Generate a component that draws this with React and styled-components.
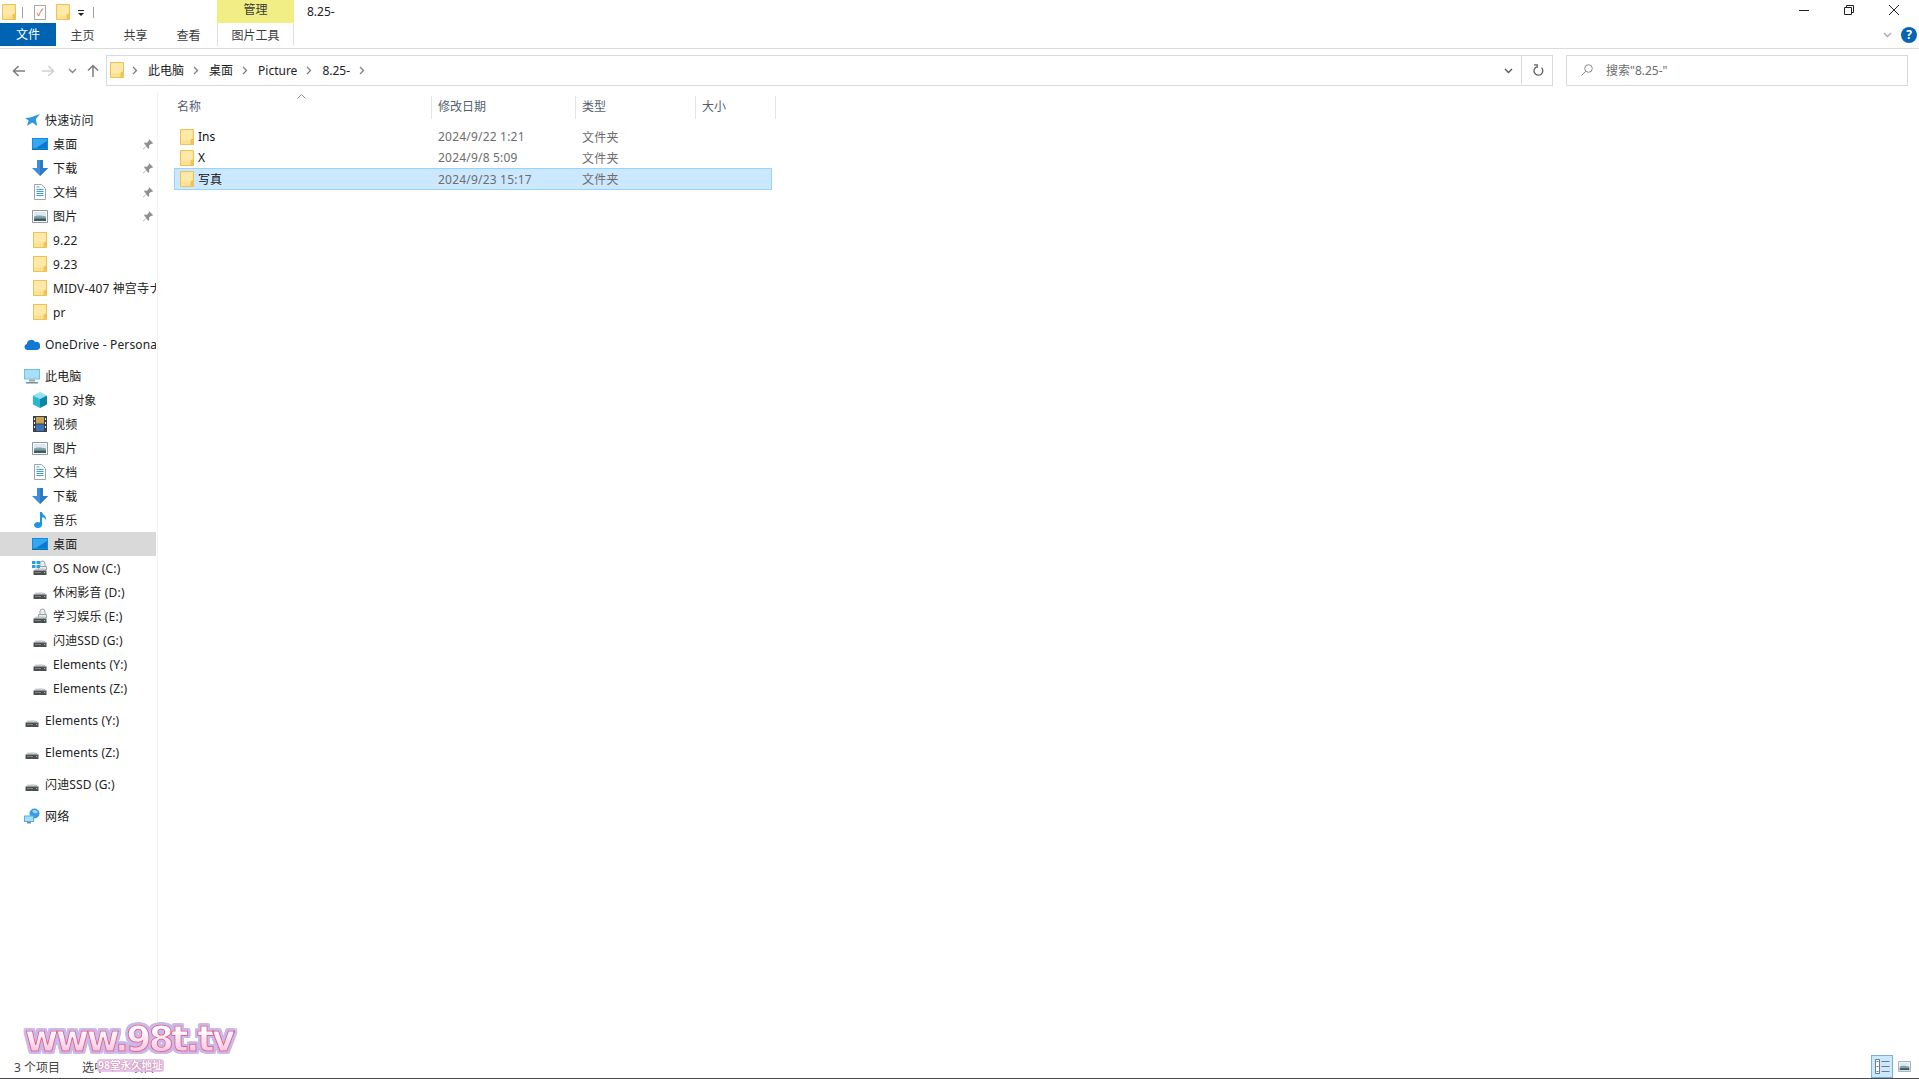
import React from 'react'
import styled, { createGlobalStyle } from 'styled-components'

const GlobalStyle = createGlobalStyle`
  html, body { margin: 0; padding: 0; background: #fff; overflow: hidden; }
  body { font-family: "Noto Sans", "Noto Sans CJK SC", "Liberation Sans", sans-serif; font-size: 12px; color: #1f1f1f; }
  * { box-sizing: border-box; }
`

const Folder = ({ w = 14, h = 16 }) => (
  <svg width={w} height={h} viewBox="0 0 14 16">
    <path d="M.5.5h13v15H.5z" fill="#ffe08f" stroke="#e9c35f" />
    <path d="M1.5 1.5h11v10h-11z" fill="#ffe9a8" />
    <path d="M10.5 15.5v-5l3-1.5v7z" fill="#f0c452" />
  </svg>
)
const Desktop = () => (
  <svg width="16" height="12" viewBox="0 0 16 12">
    <path d="M0 0h16v11H0z" fill="#0f8de0" />
    <path d="M1 1h14v9H1z" fill="#35a7ee" />
    <path d="M4 10 15 3v7z" fill="#0a78cf" />
    <path d="M0 11h16v1H0z" fill="#0b6fb8" />
  </svg>
)
const Download = () => (
  <svg width="16" height="16" viewBox="0 0 16 16">
    <path d="M5 0h6v8h5l-8 8-8-8h5z" fill="#3d8ddd" />
    <path d="M8 0h3v8h5l-8 8z" fill="#2f78c6" />
  </svg>
)
const Doc = () => (
  <svg width="12" height="16" viewBox="0 0 12 16">
    <path d="M.5.5h7l4 4v11H.5z" fill="#fff" stroke="#9aa5ad" />
    <path d="M2.5 3h3M2.5 5.5h7M2.5 7.5h7M2.5 9.5h7M2.5 11.5h7" stroke="#3f9bd8" />
  </svg>
)
const Pics = () => (
  <svg width="16" height="13" viewBox="0 0 16 13">
    <path d="M.5.5h15v12H.5z" fill="#fff" stroke="#8d98a3" />
    <path d="M2 2h12v5H2z" fill="#dce9f2" />
    <path d="M2 6.5c3-1.5 6-1 12 0V9H2z" fill="#7fa3a8" />
    <path d="M2 8.5h12V11H2z" fill="#3f5b60" />
  </svg>
)
const Pin = () => (
  <svg width="10" height="11" viewBox="0 0 10 11">
    <path d="M6 0l4 4-1 1-1-.3-2 2 .2 2-1 1-2.2-2.4L.5 10.5 0 10l3.2-3.2L1 4.6l1-1 2 .2 2-2L5.7 1z" fill="#8f8f8f" />
  </svg>
)
const Star = () => (
  <svg width="15" height="15" viewBox="0 0 15 15">
    <path d="M15 1 10.8 6l1.4 7-5-3.4L2 13l1.7-5.6L0 5l5.4-.4z" fill="#2f95e0" />
  </svg>
)
const Cloud = () => (
  <svg width="16" height="11" viewBox="0 0 16 11">
    <path d="M3.3 11a3 3 0 0 1-.6-5.9A4.6 4.6 0 0 1 11.2 3 3.9 3.9 0 0 1 13 11z" fill="#1378d4" />
  </svg>
)
const Monitor = () => (
  <svg width="16" height="15" viewBox="0 0 16 15">
    <path d="M0 0h16v10.5H0z" fill="#6cc0ee" />
    <path d="M1 1h14v8.5H1z" fill="#a9def7" />
    <path d="M5 10.5h6v2H5z" fill="#9ba8b0" />
    <path d="M2 13h12v1.5H2z" fill="#7d8b94" />
  </svg>
)
const Cube = () => (
  <svg width="14" height="16" viewBox="0 0 14 16">
    <path d="M7 0l7 3.5-7 3.5L0 3.5z" fill="#8fe3ec" />
    <path d="M0 3.5 7 7v9l-7-3.5z" fill="#27b9d0" />
    <path d="M14 3.5 7 7v9l7-3.5z" fill="#0e84a8" />
  </svg>
)
const Film = () => (
  <svg width="14" height="16" viewBox="0 0 14 16">
    <path d="M0 0h14v16H0z" fill="#3b3f47" />
    <path d="M3 1h8v6.5H3z" fill="#caa34e" />
    <path d="M3 8.5h8V15H3z" fill="#3a73b8" />
    <path d="M1 2h1v2H1zM1 6h1v2H1zM1 10h1v2H1zM12 2h1v2h-1zM12 6h1v2h-1zM12 10h1v2h-1z" fill="#e8e8e8" />
  </svg>
)
const Note = () => (
  <svg width="13" height="16" viewBox="0 0 13 16">
    <path d="M6 0h2c.4 3 5 3.6 4 8.2C11.4 6.2 9.8 5.4 8 5.2V13a4 3 0 1 1-2-2.6z" fill="#1e94e6" />
  </svg>
)
const Drive = ({ lock, win }) => (
  <svg width="16" height="16" viewBox="0 0 16 16">
    {lock && <path d="M8 7V3.5a2.5 2.5 0 0 1 5 0V7M6.5 6.5h8v3h-8z" fill="#e9ecee" stroke="#9aa2a8" />}
    {win && <path d="M0 1h3.500v3H0zM4.500 1H8v3H4.500zM0 5h3.500v3H0zM4.500 5H8v3H4.500z" fill="#27a0dc" />}
    <path d="M2 10.5 3.5 8.5h9l1.500 2z" fill="#c5c9cc" />
    <path d="M1.5 10.5h13V15h-13z" fill="#4a4f52" />
    <path d="M3 12.5h6" stroke="#7d8488" />
    <path d="M12 12h1.200v1H12z" fill="#7fe07f" />
  </svg>
)
const Network = () => (
  <svg width="16" height="16" viewBox="0 0 16 16">
    <circle cx="10.5" cy="5.5" r="5" fill="#3a9be0" />
    <path d="M8 3c2-2 5-1 6 1-2 2-4 2-6-1z" fill="#9ad7f7" />
    <path d="M0 7.5h10V14H0z" fill="#4db0ec" />
    <path d="M1 8.5h8V13H1z" fill="#a9def7" />
    <path d="M3 14h4v1.500H3z" fill="#7d8b94" />
  </svg>
)
const ListView = () => (
  <svg width="15" height="15" viewBox="0 0 15 15">
    <path d="M.5.5h4v14h-4z" fill="#fff" stroke="#6f7b84" />
    <path d="M1.500 2.500h2M1.500 7.500h2M1.500 12.500h2M6.500 2.500h8M6.500 7.500h8M6.500 12.500h8" stroke="#6f7b84" />
  </svg>
)
const Refresh = () => (
  <svg width="12" height="13" viewBox="0 0 12 13" fill="none" stroke="#606060" strokeWidth="1.3">
    <path d="M9.500 3.600a4.400 4.400 0 1 1-5-.8" />
    <path d="M2 .8h3.200v3.200" />
  </svg>
)
const Chevron = ({ dir = 'right', color = '#808080' }) => (
  <svg width="9" height="9" viewBox="0 0 9 9" fill="none" stroke={color} strokeWidth="1.3">
    <path d={dir === 'right' ? 'M3 1l3.500 3.500L3 8' : 'M1 3l3.500 3.500L8 3'} />
  </svg>
)
const ArrowLeft = ({ color = '#7d7d7d', flip }) => (
  <svg width="13" height="12" viewBox="0 0 13 12" fill="none" stroke={color} strokeWidth="1.5" style={flip ? { transform: 'scaleX(-1)' } : undefined}>
    <path d="M13 6H1.500M6.500 1 1.500 6l5 5" />
  </svg>
)
const ArrowUp = () => (
  <svg width="12" height="13" viewBox="0 0 12 13" fill="none" stroke="#7d7d7d" strokeWidth="1.5">
    <path d="M6 13V1.500M1 6.500l5-5 5 5" />
  </svg>
)

const Window = styled.div`
  height: 100vh;
  display: flex;
  flex-direction: column;
  position: relative;
  overflow: hidden;
`
const TitleBar = styled.div`
  height: 23px;
  display: flex;
  align-items: stretch;
  flex: none;
`
const Qat = styled.div`
  width: 217px;
  display: flex;
  align-items: center;
  padding: 1px 0 0 2px;
`
const QatDivider = styled.span`
  width: 1px;
  height: 11px;
  background: #a0a0a0;
  margin: ${p => p.$margin};
`
const QatDoc = styled.span`
  width: 12px;
  height: 15px;
  margin-right: 10px;
  border: 1px solid #a8a8a8;
  color: #d9512c;
  font-size: 10px;
  line-height: 13px;
  text-align: center;
  background: #fff;
`
const QatDrop = styled.span`
  width: 6px;
  height: 6px;
  margin: 2px 0 0 8px;
  border-top: 1px solid #222;
  position: relative;
  &::after {
    content: '';
    position: absolute;
    left: 0;
    top: 2px;
    border: 3px solid transparent;
    border-top: 3px solid #222;
  }
`
const ManageTab = styled.div`
  width: 77px;
  background: #f0ee84;
  color: #3b3b3b;
  text-align: center;
  line-height: 19px;
`
const WinTitle = styled.div`
  padding-left: 13px;
  line-height: 23px;
  color: #222;
`
const WinButtons = styled.div`
  margin-left: auto;
  display: flex;
  padding: 5px 20px 0 0;
  gap: 35px;
`
const RibbonTabs = styled.div`
  height: 26px;
  display: flex;
  flex: none;
  border-bottom: 1px solid #dadada;
  padding-bottom: 2px;
  align-items: stretch;
`
const FileTab = styled.div`
  width: 56px;
  background: #0063b1;
  color: #fff;
  text-align: center;
  line-height: 24px;
`
const RibbonTab = styled.div`
  width: 53px;
  color: #3c3c3c;
  text-align: center;
  line-height: 26px;
`
const ToolTab = styled.div`
  width: 77px;
  margin-left: 2px;
  border: 1px solid #e0e0e0;
  border-width: 0 1px;
  text-align: center;
  line-height: 26px;
  color: #3c3c3c;
`
const RibbonRight = styled.div`
  margin-left: auto;
  display: flex;
  align-items: center;
  gap: 9px;
  padding-right: 2px;
`
const HelpBadge = styled.span`
  width: 16px;
  height: 16px;
  border-radius: 50%;
  background: #0a64b4;
  color: #fff;
  font-weight: 700;
  font-size: 12px;
  line-height: 16px;
  text-align: center;
`
const AddressRow = styled.div`
  height: 31px;
  margin-top: 6px;
  display: flex;
  flex: none;
  align-items: center;
`
const NavButtons = styled.div`
  width: 106px;
  display: grid;
  grid-template-columns: 13px 13px 9px 12px;
  column-gap: 17px;
  align-items: center;
  padding-left: 12px;
  & > :nth-child(3) { margin-left: -4px; }
  & > :nth-child(4) { margin-left: -11px; }
`
const AddressBox = styled.div`
  width: 1447px;
  height: 31px;
  border: 1px solid #d9d9d9;
  display: flex;
  align-items: center;
  padding: 0 0 1px 3px;
  color: #222;
`
const Crumb = styled.span`
  margin: 0 7px 0 9px;
  white-space: nowrap;
`
const CrumbFolder = styled.span`
  display: flex;
  margin-right: 6px;
`
const AddressEnd = styled.div`
  margin-left: auto;
  display: flex;
  align-items: center;
  height: 100%;
`
const AddressDrop = styled.div`
  width: 30px;
  height: 100%;
  display: flex;
  align-items: center;
  justify-content: center;
  padding-left: 3px;
  border-right: 1px solid #d9d9d9;
`
const RefreshBtn = styled.div`
  width: 30px;
  display: flex;
  justify-content: center;
  padding-left: 2px;
`
const SearchBox = styled.div`
  width: 342px;
  height: 31px;
  margin-left: 13px;
  border: 1px solid #d9d9d9;
  display: flex;
  align-items: center;
  gap: 13px;
  padding: 0 0 1px 14px;
  color: #6d6d6d;
`
const Body = styled.div`
  flex: 1;
  min-height: 0;
  display: flex;
  margin-top: 6px;
`
const Sidebar = styled.nav`
  width: 158px;
  flex: none;
  padding-top: 16px;
  border-right: 1px solid #f2f2f2;
  overflow: hidden;
`
const Group = styled.div`
  margin-bottom: 8px;
`
const NavRow = styled.div`
  width: 156px;
  height: 24px;
  display: flex;
  align-items: center;
  position: relative;
  white-space: nowrap;
  overflow: hidden;
  letter-spacing: 0.15px;
  padding-left: ${p => (p.$child ? 32 : 24)}px;
  background: ${p => (p.$active ? '#d9d9d9' : 'transparent')};
  color: #222;
`
const NavIcon = styled.span`
  width: 16px;
  height: 16px;
  display: flex;
  align-items: center;
  justify-content: center;
  flex: none;
  margin-right: 5px;
`
const PinSlot = styled.span`
  position: absolute;
  right: 3px;
  top: 7px;
  display: flex;
`
const Main = styled.main`
  flex: 1;
  padding: 4px 0 0 16px;
`
const HeaderRow = styled.div`
  display: grid;
  grid-template-columns: 258px 144px 120px 80px;
  height: 23px;
  position: relative;
`
const HeaderCell = styled.div`
  color: #55606e;
  line-height: 22px;
  padding-left: ${p => p.$pad || 6}px;
  border-right: 1px solid #e5e5e5;
`
const SortCaret = styled.span`
  position: absolute;
  left: 123px;
  top: -10px;
`
const FileList = styled.div`
  margin-top: 7px;
  width: 598px;
`
const FileRow = styled.div`
  display: grid;
  grid-template-columns: 258px 144px 120px 1fr;
  height: ${p => (p.$selected ? 22 : 21)}px;
  align-items: center;
  border: 1px solid ${p => (p.$selected ? '#99d1ff' : 'transparent')};
  background: ${p => (p.$selected ? '#cce8ff' : 'transparent')};
`
const NameCell = styled.div`
  display: flex;
  align-items: center;
  gap: 4px;
  padding-left: 5px;
  color: #111;
`
const MetaCell = styled.div`
  color: #6d6d6d;
  padding-left: 5px;
  letter-spacing: 0.2px;
`
const StatusBar = styled.footer`
  height: 24px;
  flex: none;
  border-bottom: 1px solid #4a4a4a;
  display: flex;
  align-items: center;
  padding: 0 7px 0 14px;
  color: #444;
`
const StatusItem = styled.span`
  width: 68px;
  white-space: nowrap;
`
const ViewButtons = styled.div`
  margin-left: auto;
  display: flex;
  align-items: stretch;
  align-self: stretch;
  gap: 4px;
`
const ViewBtn = styled.span`
  width: ${p => (p.$active ? 22 : 15)}px;
  display: flex;
  align-items: center;
  justify-content: center;
  border: 1px solid ${p => (p.$active ? '#74b4d8' : 'transparent')};
  background: ${p => (p.$active ? '#cce8ff' : 'transparent')};
`
const Watermark = styled.div`
  position: absolute;
  left: 25px;
  top: 1016px;
  font-family: "DejaVu Sans", sans-serif;
  font-weight: 700;
  font-size: 36px;
  line-height: 46px;
  letter-spacing: -2.5px;
  white-space: nowrap;
  background: linear-gradient(#fff 30%, #ffc4da 80%);
  -webkit-background-clip: text;
  background-clip: text;
  color: transparent;
  -webkit-text-stroke: 1px #d9669a;
  filter: drop-shadow(2px 0 0 #c9b8ec) drop-shadow(-2px 0 0 #c9b8ec) drop-shadow(0 2px 0 #c9b8ec) drop-shadow(0 -2px 0 #c9b8ec);
`
const WatermarkSub = styled.div`
  position: absolute;
  left: 97px;
  top: 1059px;
  padding: 0 1px;
  font-size: 10.5px;
  line-height: 13px;
  font-weight: 700;
  white-space: nowrap;
  color: #fff;
  text-shadow: 0 0 1px #d9669a, 0 0 1px #d9669a;
  background: rgba(222, 190, 232, 0.85);
  border-radius: 3px;
`

const quick = [
  [<Desktop />, '桌面', true],
  [<Download />, '下载', true],
  [<Doc />, '文档', true],
  [<Pics />, '图片', true],
  [<Folder />, '9.22'],
  [<Folder />, '9.23'],
  [<Folder />, 'MIDV-407 神宫寺ナオ'],
  [<Folder />, 'pr'],
]
const pc = [
  [<Cube />, '3D 对象'],
  [<Film />, '视频'],
  [<Pics />, '图片'],
  [<Doc />, '文档'],
  [<Download />, '下载'],
  [<Note />, '音乐'],
  [<Desktop />, '桌面', false, true],
  [<Drive win lock />, 'OS Now (C:)'],
  [<Drive />, '休闲影音 (D:)'],
  [<Drive lock />, '学习娱乐 (E:)'],
  [<Drive />, '闪迪SSD (G:)'],
  [<Drive />, 'Elements (Y:)'],
  [<Drive />, 'Elements (Z:)'],
]
const roots = [
  [<Cloud />, 'OneDrive - Personal'],
]
const drives = [
  [<Drive />, 'Elements (Y:)'],
  [<Drive />, 'Elements (Z:)'],
  [<Drive />, '闪迪SSD (G:)'],
  [<Network />, '网络'],
]
const files = [
  ['Ins', '2024/9/22 1:21'],
  ['X', '2024/9/8 5:09'],
  ['写真', '2024/9/23 15:17', true],
]
const crumbs = ['此电脑', '桌面', 'Picture', '8.25-']

const SideRow = ({ item, child }) => (
  <NavRow $child={child} $active={item[3]}>
    <NavIcon>{item[0]}</NavIcon>
    {item[1]}
    {item[2] && <PinSlot><Pin /></PinSlot>}
  </NavRow>
)

export default function App() {
  return (
    <Window>
      <GlobalStyle />
      <TitleBar>
        <Qat>
          <Folder />
          <QatDivider $margin="0 11px 0 6px" />
          <QatDoc>✓</QatDoc>
          <Folder />
          <QatDrop />
          <QatDivider $margin="0 0 0 9px" />
        </Qat>
        <ManageTab>管理</ManageTab>
        <WinTitle>8.25-</WinTitle>
        <WinButtons>
          <svg width="10" height="10" viewBox="0 0 10 10" stroke="#222"><path d="M0 5.500h10" /></svg>
          <svg width="10" height="10" viewBox="0 0 10 10" fill="none" stroke="#222"><path d="M.5 2.500h7v7h-7zM2.500 2.500v-2h7v7h-2" /></svg>
          <svg width="10" height="10" viewBox="0 0 10 10" stroke="#222"><path d="M0 0l10 10M10 0 0 10" /></svg>
        </WinButtons>
      </TitleBar>
      <RibbonTabs>
        <FileTab>文件</FileTab>
        <RibbonTab>主页</RibbonTab>
        <RibbonTab>共享</RibbonTab>
        <RibbonTab>查看</RibbonTab>
        <ToolTab>图片工具</ToolTab>
        <RibbonRight>
          <Chevron dir="down" color="#a8a8a8" />
          <HelpBadge>?</HelpBadge>
        </RibbonRight>
      </RibbonTabs>
      <AddressRow>
        <NavButtons>
          <ArrowLeft />
          <ArrowLeft color="#cfcfcf" flip />
          <Chevron dir="down" />
          <ArrowUp />
        </NavButtons>
        <AddressBox>
          <CrumbFolder><Folder /></CrumbFolder>
          <Chevron />
          {crumbs.map(c => (
            <React.Fragment key={c}>
              <Crumb>{c}</Crumb>
              <Chevron />
            </React.Fragment>
          ))}
          <AddressEnd>
            <AddressDrop><Chevron dir="down" color="#555" /></AddressDrop>
            <RefreshBtn><Refresh /></RefreshBtn>
          </AddressEnd>
        </AddressBox>
        <SearchBox>
          <svg width="12" height="12" viewBox="0 0 12 12" fill="none" stroke="#8a8a8a"><circle cx="7.5" cy="4.5" r="3.8" /><path d="M4.700 7.300.5 11.500" /></svg>
          搜索"8.25-"
        </SearchBox>
      </AddressRow>
      <Body>
        <Sidebar>
          <Group>
            <SideRow item={[<Star />, '快速访问']} />
            {quick.map(q => <SideRow key={q[1]} item={q} child />)}
          </Group>
          <Group>
            {roots.map(r => <SideRow key={r[1]} item={r} />)}
          </Group>
          <Group>
            <SideRow item={[<Monitor />, '此电脑']} />
            {pc.map((p, i) => <SideRow key={i} item={p} child />)}
          </Group>
          {drives.map((d, i) => (
            <Group key={i}><SideRow item={d} /></Group>
          ))}
        </Sidebar>
        <Main>
          <HeaderRow>
            <SortCaret>
              <svg width="9" height="5" viewBox="0 0 9 5" fill="none" stroke="#8a8a8a"><path d="M.5 4.500l4-4 4 4" /></svg>
            </SortCaret>
            <HeaderCell $pad={3}>名称</HeaderCell>
            <HeaderCell>修改日期</HeaderCell>
            <HeaderCell>类型</HeaderCell>
            <HeaderCell>大小</HeaderCell>
          </HeaderRow>
          <FileList>
            {files.map(f => (
              <FileRow key={f[0]} $selected={f[2]}>
                <NameCell><Folder />{f[0]}</NameCell>
                <MetaCell>{f[1]}</MetaCell>
                <MetaCell>文件夹</MetaCell>
                <span />
              </FileRow>
            ))}
          </FileList>
        </Main>
      </Body>
      <StatusBar>
        <StatusItem>3 个项目</StatusItem>
        <StatusItem>选中 1 个项目</StatusItem>
        <ViewButtons>
          <ViewBtn $active><ListView /></ViewBtn>
          <ViewBtn><Pics /></ViewBtn>
        </ViewButtons>
      </StatusBar>
      <Watermark>www.98t.tv</Watermark>
      <WatermarkSub>98堂永久地址</WatermarkSub>
    </Window>
  )
}
